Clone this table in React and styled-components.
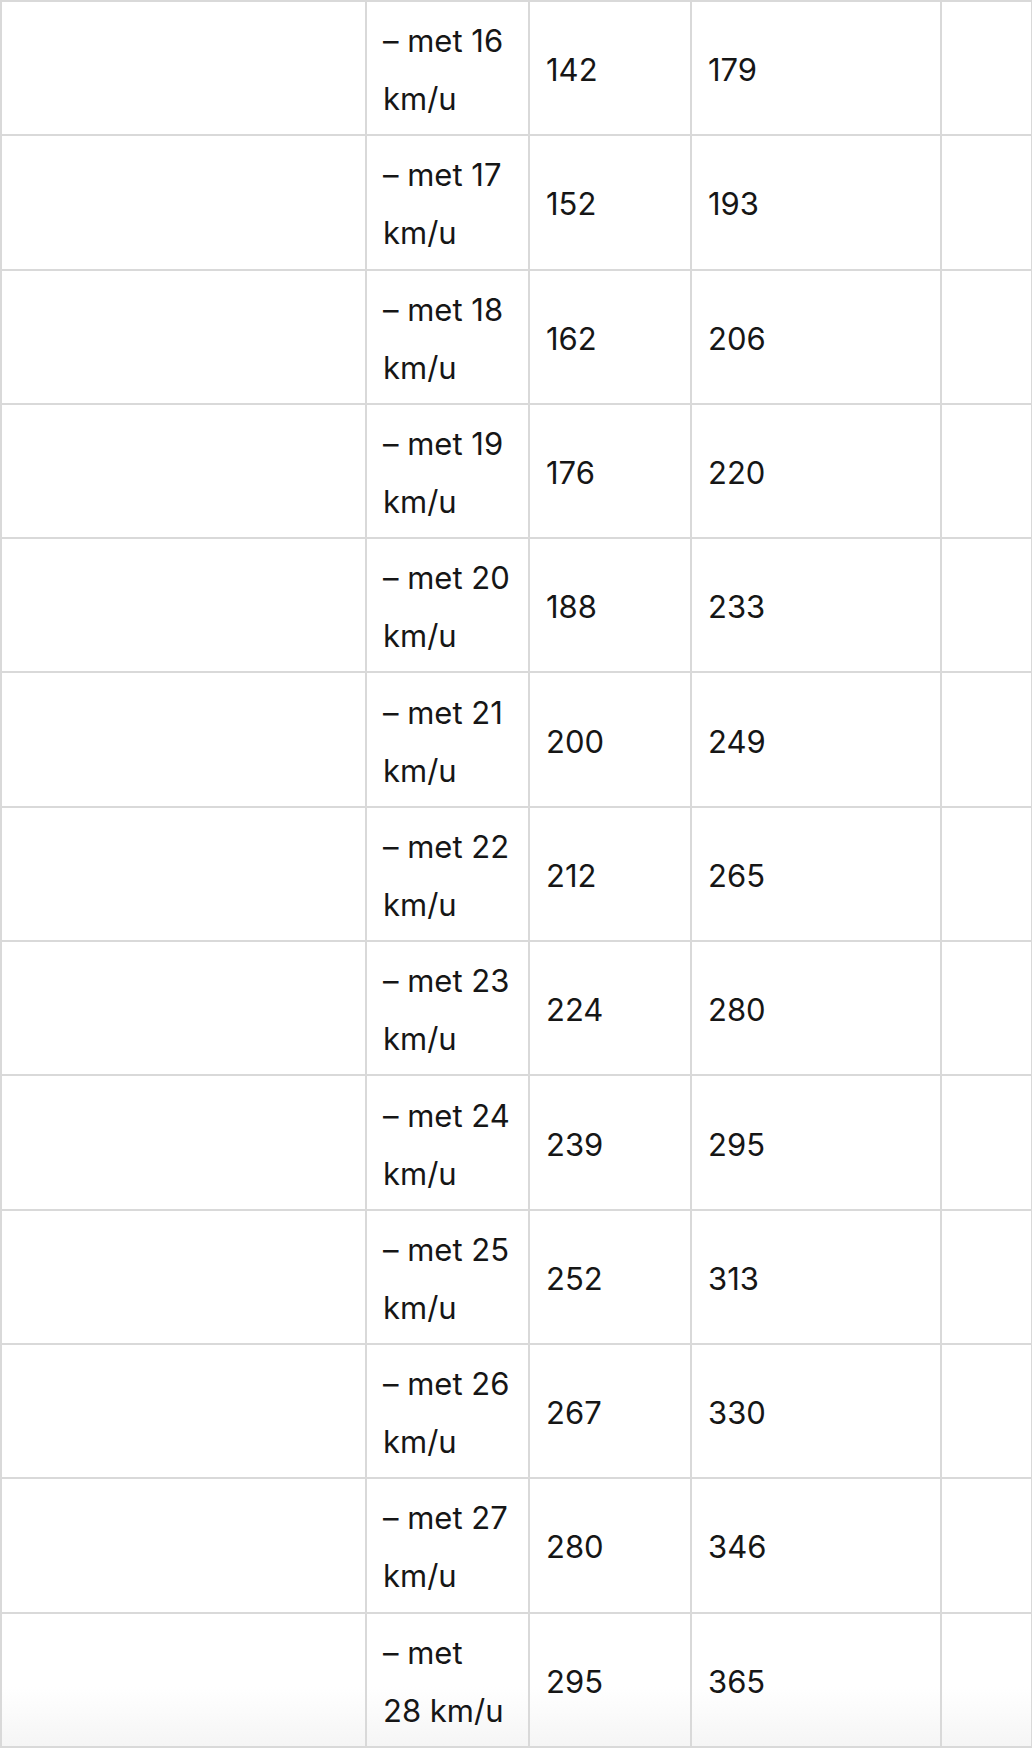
import React from 'react';
import styled, { createGlobalStyle } from 'styled-components';

const GlobalStyle = createGlobalStyle`
    html, body {
        margin: 0;
        padding: 0;
        background: #fff;
    }
    body {
        font-family: Inter, "Noto Sans", "Liberation Sans", sans-serif;
        color: #161616;
    }
`

// snelheid in km/u met twee waarden per rij
const rows = [
    { speed: 16, a: 142, b: 179 },
    { speed: 17, a: 152, b: 193 },
    { speed: 18, a: 162, b: 206 },
    { speed: 19, a: 176, b: 220 },
    { speed: 20, a: 188, b: 233 },
    { speed: 21, a: 200, b: 249 },
    { speed: 22, a: 212, b: 265 },
    { speed: 23, a: 224, b: 280 },
    { speed: 24, a: 239, b: 295 },
    { speed: 25, a: 252, b: 313 },
    { speed: 26, a: 267, b: 330 },
    { speed: 27, a: 280, b: 346 },
    { speed: 28, a: 295, b: 365, split: true },
]

const App = () => {
    return (<Wrapper>
        <GlobalStyle />
        <Table>
            <colgroup>
                <Col width="365px" />
                <Col width="163px" />
                <Col width="162px" />
                <Col width="250px" />
                <Col width="91px" />
            </colgroup>
            <tbody>
                {rows.map((row, i) => (
                    <Row key={row.speed} last={i === rows.length - 1}>
                        <Cell></Cell>
                        <Cell>
                            {row.split
                                ? <>– met<br />{row.speed} km/u</>
                                : <>– met {row.speed}<br />km/u</>}
                        </Cell>
                        <Cell>{row.a}</Cell>
                        <Cell>{row.b}</Cell>
                        <Cell></Cell>
                    </Row>
                ))}
            </tbody>
        </Table>
    </Wrapper>);
}

export default App;

const Wrapper = styled.div`
    width: 1032px;
    overflow: hidden;
`

const Table = styled.table`
    border-collapse: collapse;
    table-layout: fixed;
    width: 1031px;
    font-size: 31px;
    line-height: 58px;
`

const Col = styled.col`
    width: ${props => props.width};
`

const Row = styled.tr`
    height: 134.3px;
    background: ${props => props.last
        ? 'linear-gradient(to bottom, #fff 0%, #fff 55%, #f5f5f5 100%)'
        : '#fff'};
`

const Cell = styled.td`
    border: 2px solid #d9d9d9;
    padding: 10px 16px 6px 16px;
    vertical-align: middle;
    white-space: nowrap;
    overflow: hidden;
`
